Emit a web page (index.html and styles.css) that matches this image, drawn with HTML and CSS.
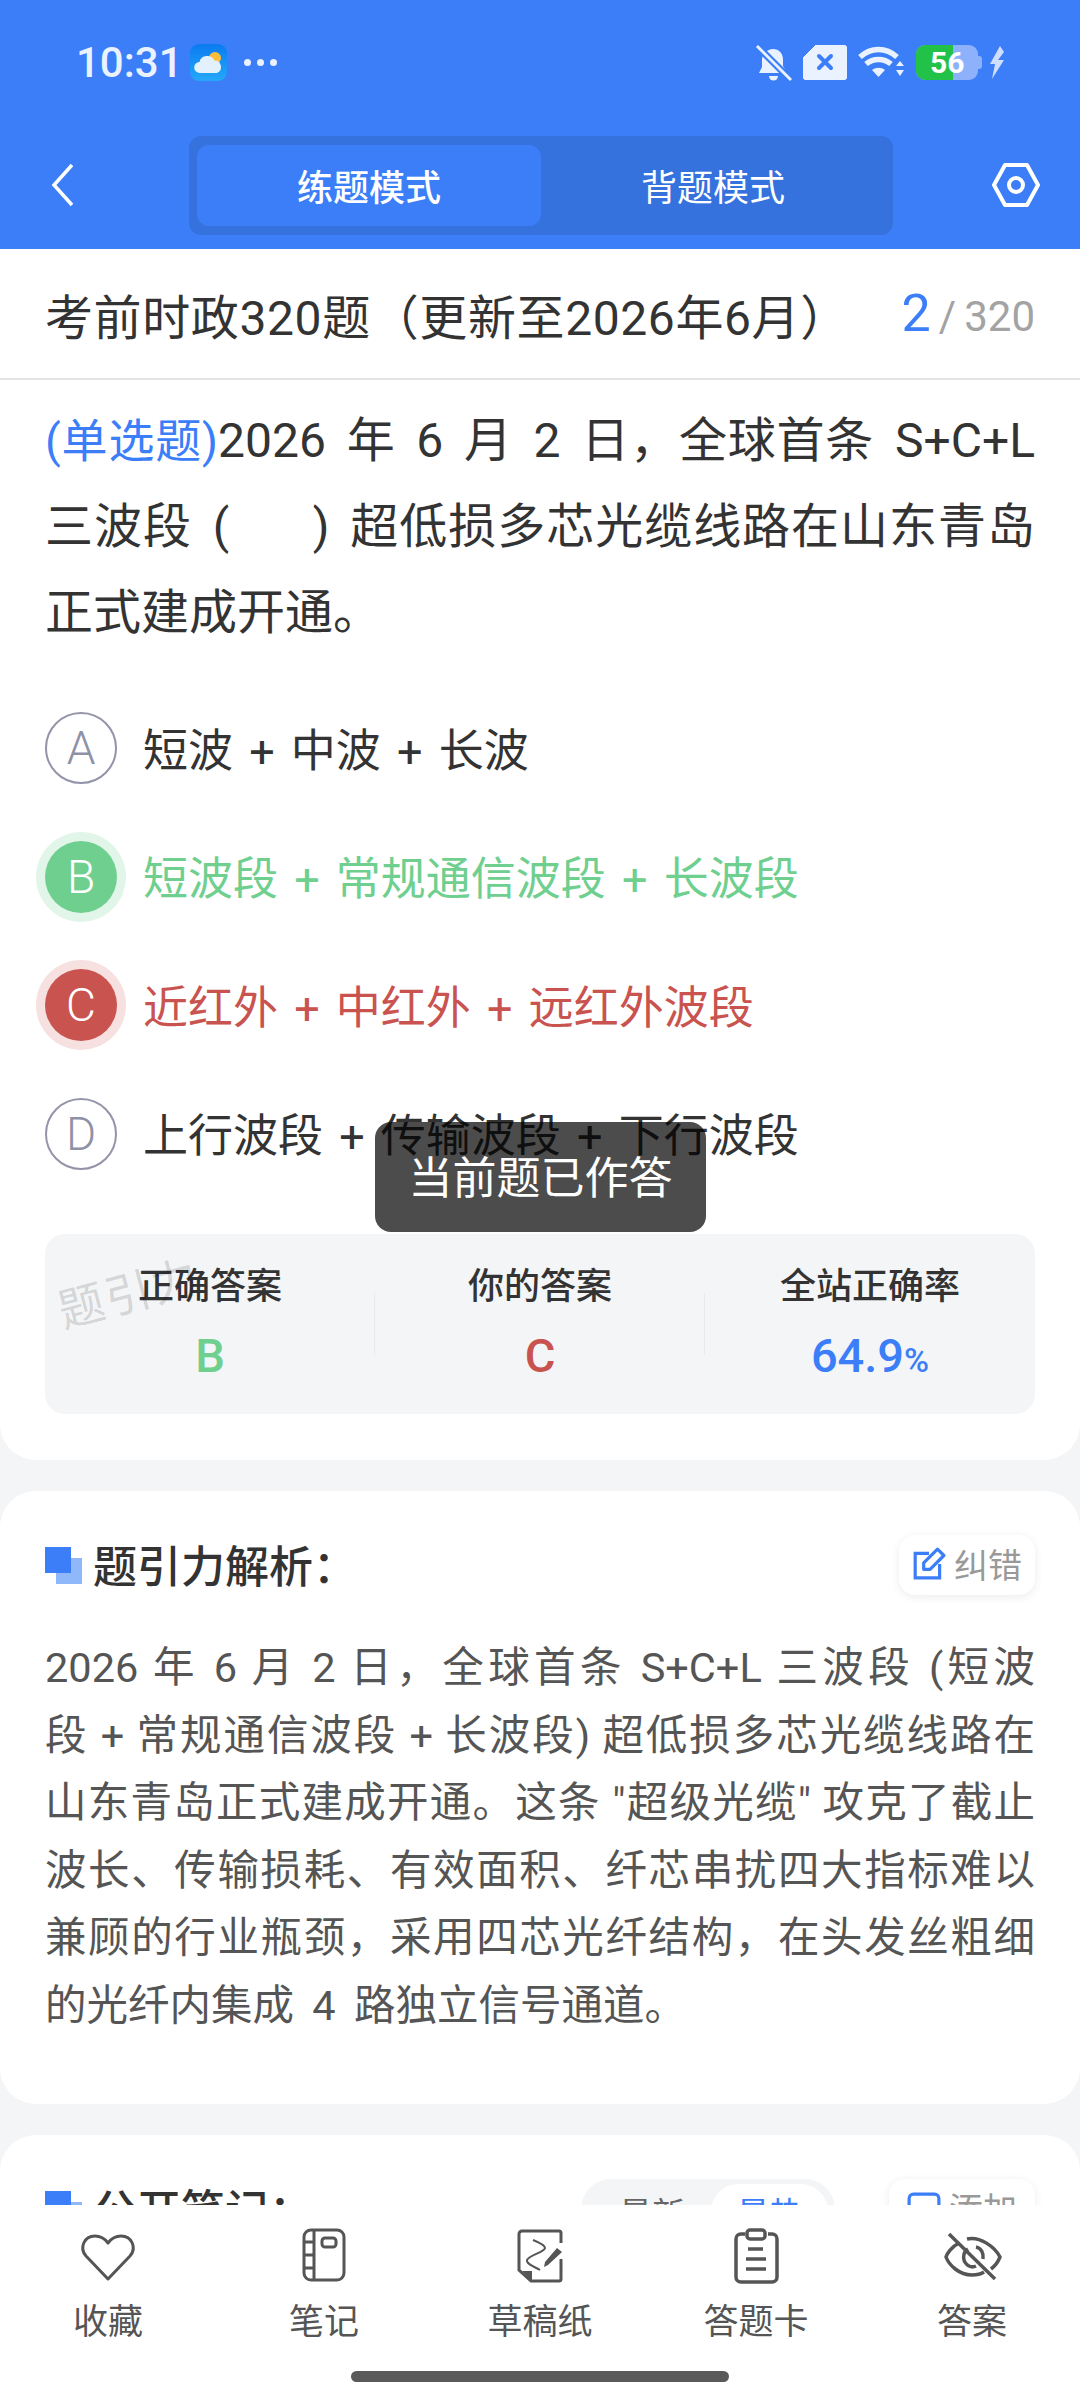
FILE: index.html
```html
<!DOCTYPE html>
<html lang="zh-CN">

<head>
    <meta charset="UTF-8">
    <meta name="viewport" content="width=device-width, initial-scale=1.0">
    <title>练题模式</title>
    <link rel="stylesheet" href="styles.css">
</head>

<body>
    <div class="page">
        <header class="top">
            <div class="status-bar">
                <span class="time">10:31</span>
                <svg class="weather" viewBox="0 0 37 37">
                    <defs>
                        <linearGradient id="sky" x1="0" y1="0" x2="0" y2="1">
                            <stop offset="0" stop-color="#0a7bf0" />
                            <stop offset="1" stop-color="#25a8fb" />
                        </linearGradient>
                    </defs>
                    <rect width="37" height="37" rx="9" fill="url(#sky)" />
                    <circle cx="25" cy="14" r="6" fill="#fdbd3a" />
                    <path d="M10 29a5.5 5.5 0 0 1-.6-11 8 8 0 0 1 15-1.500 6.500 6.500 0 0 1 2.600 12.500z" fill="#e3f1fd" />
                </svg>
                <span class="dots"><i></i><i></i><i></i></span>
                <div class="status-right">
                    <svg class="s-bell" viewBox="0 0 37 38">
                        <path d="M18 5c6 0 10 4 10 11v6l4 7H4l3-6v-7c0-6 5-11 11-11z" fill="#eaf1ff" />
                        <path d="M14 32h9a4.500 4.500 0 0 1-9 0z" fill="#eaf1ff" />
                        <path d="M1 1l35 35" stroke="#3b7ef8" stroke-width="7" />
                        <path d="M2 2l34 34" stroke="#eaf1ff" stroke-width="3" />
                    </svg>
                    <svg class="s-box" viewBox="0 0 44 35">
                        <path d="M13 0h27a4 4 0 0 1 4 4v27a4 4 0 0 1-4 4H4a4 4 0 0 1-4-4V13z" fill="#eaf1ff" stroke="#eaf1ff" stroke-linejoin="round" />
                        <path d="M16 11l12 12M28 11L16 23" stroke="#3b7ef8" stroke-width="4" stroke-linecap="round" />
                    </svg>
                    <svg class="s-wifi" viewBox="0 0 47 33">
                        <path d="M2 11c11-10 26-10 37 0M8 18c7-6 18-6 25 0" fill="none" stroke="#eaf1ff" stroke-width="5.500" />
                        <path d="M14 24c4-3 9-3 13 0l-6.500 7z" fill="#eaf1ff" />
                        <path d="M38 20h8l-4-5zM38 24h8l-4 6z" fill="#eaf1ff" />
                    </svg>
                    <div class="battery">
                        <span class="battery-level"></span>
                        <span class="battery-num">56</span>
                        <span class="battery-tip"></span>
                    </div>
                    <svg class="s-bolt" viewBox="0 0 16 33">
                        <path d="M11 0L1 18h5l-3 15 12-19H9l6-8z" fill="#cfdefc" />
                    </svg>
                </div>
            </div>
            <nav class="nav">
                <svg class="nav-back" viewBox="0 0 24 44">
                    <path d="M21 2L3 22l18 20" fill="none" stroke="#fff" stroke-width="3.500" />
                </svg>
                <div class="tabs">
                    <div class="tab tab-active">练题模式</div>
                    <div class="tab">背题模式</div>
                </div>
                <svg class="nav-set" viewBox="0 0 48 44">
                    <path d="M13 2h22l11 20-11 20H13L2 22z" fill="none" stroke="#fff" stroke-width="4" stroke-linejoin="round" />
                    <circle cx="24" cy="22" r="7" fill="none" stroke="#fff" stroke-width="4" />
                </svg>
            </nav>
        </header>

        <div class="scroll">
            <section class="card card-first">
                <div class="title-row">
                    <h1>考前时政320题（更新至2026年6月）</h1>
                    <div class="count"><b>2</b><span class="slash">/</span><span>320</span></div>
                </div>
                <div class="question-body">
                    <p class="question"><span class="q-type">(单选题)</span>2026 年 6 月 2 日，全球首条 S+C+L 三波段 (&nbsp;&nbsp;&nbsp;&nbsp;) 超低损多芯光缆线路在山东青岛正式建成开通。</p>
                    <div class="options">
                        <div class="option"><span class="letter">A</span>短波 + 中波 + 长波</div>
                        <div class="option option-right"><span class="letter">B</span>短波段 + 常规通信波段 + 长波段</div>
                        <div class="option option-wrong"><span class="letter">C</span>近红外 + 中红外 + 远红外波段</div>
                        <div class="option"><span class="letter">D</span>上行波段 + 传输波段 + 下行波段</div>
                    </div>
                    <div class="stats">
                        <div class="stat">
                            <div class="stat-label">正确答案</div>
                            <div class="stat-value green">B</div>
                        </div>
                        <div class="stat">
                            <div class="stat-label">你的答案</div>
                            <div class="stat-value red">C</div>
                        </div>
                        <div class="stat">
                            <div class="stat-label">全站正确率</div>
                            <div class="stat-value blue">64.9<small>%</small></div>
                        </div>
                        <span class="watermark">题引力</span>
                    </div>
                </div>
            </section>

            <section class="card">
                <div class="card-head">
                    <span class="mark"></span>
                    <h2>题引力解析：</h2>
                    <div class="small-btn">
                        <svg viewBox="0 0 32 32">
                            <path d="M16 6H3v23h23V16" fill="none" stroke="#3b7ef8" stroke-width="3" />
                            <path d="M11 21v-6L24 2l6 6-13 13z" fill="none" stroke="#3b7ef8" stroke-width="3" stroke-linejoin="round" />
                        </svg>
                        纠错
                    </div>
                </div>
                <div class="analysis">
                    <p>2026 年 6 月 2 日，全球首条 S+C+L 三波段 (短波</p>
                    <p>段 + 常规通信波段 + 长波段) 超低损多芯光缆线路在</p>
                    <p>山东青岛正式建成开通。这条 "超级光缆" 攻克了截止</p>
                    <p>波长、传输损耗、有效面积、纤芯串扰四大指标难以</p>
                    <p>兼顾的行业瓶颈，采用四芯光纤结构，在头发丝粗细</p>
                    <p class="analysis-end">的光纤内集成 4 路独立信号通道。</p>
                </div>
            </section>

            <section class="card">
                <div class="card-head">
                    <span class="mark"></span>
                    <h2>公开笔记：</h2>
                    <div class="sort">
                        <span>最新</span>
                        <span class="sort-active">最热</span>
                    </div>
                    <div class="small-btn small-btn-wide">
                        <svg viewBox="0 0 32 32">
                            <rect x="2" y="3" width="28" height="24" rx="4" fill="none" stroke="#3b7ef8" stroke-width="3" />
                            <path d="M10 15h12" stroke="#3b7ef8" stroke-width="3" />
                        </svg>
                        添加
                    </div>
                </div>
            </section>
        </div>

        <footer class="bottom">
            <div class="tools">
                <div class="tool">
                    <svg viewBox="0 0 60 60">
                        <path d="M30 53L8 30C1 22 6 10 17 10c6 0 10 3 13 7 3-4 7-7 13-7 11 0 16 12 9 20z" fill="none" stroke="#555" stroke-width="3" stroke-linejoin="round" />
                    </svg>
                    <span>收藏</span>
                </div>
                <div class="tool">
                    <svg viewBox="0 0 60 60">
                        <rect x="10" y="4" width="40" height="50" rx="7" fill="none" stroke="#555" stroke-width="3" />
                        <path d="M20 4v50M10 16h10M10 29h10M10 42h10" fill="none" stroke="#555" stroke-width="3" />
                        <rect x="28" y="12" width="14" height="9" rx="3" fill="none" stroke="#555" stroke-width="3" />
                    </svg>
                    <span>笔记</span>
                </div>
                <div class="tool">
                    <svg viewBox="0 0 60 60">
                        <path d="M51 17V7a2 2 0 0 0-2-2H12a3 3 0 0 0-3 3v36l12 11h28a2 2 0 0 0 2-2V33" fill="none" stroke="#555" stroke-width="3" />
                        <path d="M12 45h10v10z" fill="#555" />
                        <path d="M23 14c5 2 12 5 12 8 0 4-16 7-18 12-1 4 8 7 13 10" fill="none" stroke="#555" stroke-width="2" />
                        <path d="M38 39l-4 2 1-5 12-14 5 4z" fill="#555" />
                    </svg>
                    <span>草稿纸</span>
                </div>
                <div class="tool">
                    <svg viewBox="0 0 60 60">
                        <path d="M19 8h-4c-3 0-5 2-5 5v38c0 3 2 5 5 5h31c3 0 5-2 5-5V13c0-3-2-5-5-5h-4" fill="none" stroke="#555" stroke-width="3.500" />
                        <rect x="21" y="4" width="18" height="9" rx="3" fill="none" stroke="#555" stroke-width="3.500" />
                        <path d="M22 23h15M20 33h20M20 43h20" stroke="#555" stroke-width="3.500" />
                    </svg>
                    <span>答题卡</span>
                </div>
                <div class="tool">
                    <svg viewBox="0 0 60 60">
                        <path d="M17 17C9 21 5 28 4 31c3 8 13 18 26 18 5 0 9-1 12-3M25 13c13-3 28 8 33 18-2 5-5 9-9 12" fill="none" stroke="#555" stroke-width="3.500" />
                        <path d="M34 21c5 1 8 6 7 12M26 23c-6 4-6 13 1 17 2 1 5 1 7 0" fill="none" stroke="#555" stroke-width="3.500" />
                        <path d="M7 8l46 45" stroke="#555" stroke-width="3.500" />
                    </svg>
                    <span>答案</span>
                </div>
            </div>
            <div class="home-bar"></div>
        </footer>

        <div class="toast">当前题已作答</div>
    </div>
</body>

</html>
```

FILE: styles.css
```css
* {
    box-sizing: border-box;
}

body {
    margin: 0;
    background-color: #f4f5f7;
    font-family: Roboto, 'Noto Sans CJK SC', sans-serif;
    color: #333;
}

.page {
    position: relative;
    width: 1080px;
    height: 2400px;
    display: flex;
    flex-direction: column;
    overflow: hidden;
}

/* top blue area */
.top {
    height: 249px;
    background-color: #3b7ef8;
    flex-shrink: 0;
}

.status-bar {
    height: 125px;
    padding: 0 75px 0 76px;
    display: flex;
    align-items: center;
}

.time {
    font-size: 42px;
    font-weight: 500;
    color: #eaf1ff;
    width: 114px;
    line-height: 42px;
}

.weather {
    width: 37px;
    height: 37px;
}

.dots {
    display: flex;
    gap: 6px;
    margin-left: 17px;
}

.dots i {
    width: 7px;
    height: 7px;
    border-radius: 50%;
    background-color: #eaf1ff;
}

.status-right {
    margin-left: auto;
    display: flex;
    align-items: center;
}

.s-bell {
    width: 37px;
    height: 38px;
    margin-right: 11px;
}

.s-box {
    width: 44px;
    height: 35px;
    margin-right: 11px;
}

.s-wifi {
    width: 47px;
    height: 33px;
    margin-right: 11px;
}

.battery {
    position: relative;
    width: 62px;
    height: 35px;
    border-radius: 9px;
    background-color: #8db2fb;
    overflow: visible;
    margin-right: 11px;
}

.battery-level {
    display: block;
    width: 37px;
    height: 35px;
    background-color: #22c148;
    border-radius: 9px 0 0 9px;
}

.battery-num {
    position: absolute;
    top: 0;
    left: 14px;
    font-size: 30px;
    line-height: 35px;
    font-weight: 700;
    color: #fff;
}

.battery-tip {
    position: absolute;
    top: 11px;
    right: -4px;
    width: 4px;
    height: 13px;
    border-radius: 0 3px 3px 0;
    background-color: #8db2fb;
}

.s-bolt {
    width: 16px;
    height: 33px;
}

.nav {
    height: 124px;
    padding: 10px 40px 14px 51px;
    display: flex;
    align-items: center;
}

.nav-back {
    width: 24px;
    height: 44px;
}

.tabs {
    width: 704px;
    height: 99px;
    margin-left: 114px;
    padding: 9px 8px;
    display: flex;
    border-radius: 12px;
    background-color: #3672dd;
}

.tab {
    width: 344px;
    display: flex;
    align-items: center;
    justify-content: center;
    font-size: 36px;
    color: #fff;
    border-radius: 12px;
}

.tab-active {
    background-color: #3b7ef8;
    font-weight: 500;
}

.nav-set {
    width: 48px;
    height: 44px;
    margin-left: auto;
}

/* scrolling content */
.scroll {
    flex: 1;
    overflow: hidden;
}

.card {
    background-color: white;
    border-radius: 36px;
    margin-bottom: 31px;
    padding: 44px 45px 65px;
}

.card-first {
    padding: 0;
    border-radius: 0 0 36px 36px;
}

.title-row {
    height: 131px;
    padding: 0 45px;
    display: flex;
    justify-content: space-between;
    align-items: center;
    border-bottom: 2px solid #e4e4e4;
}

h1 {
    margin: 0;
    font-size: 48px;
    font-weight: 400;
    letter-spacing: 0.6px;
    color: #333;
    white-space: nowrap;
}

.count {
    display: flex;
    align-items: baseline;
    font-size: 42px;
    color: #a3a3a3;
}

.count b {
    font-size: 52px;
    font-weight: 400;
    color: #3b7ef8;
    margin-right: 8px;
}

.slash {
    margin-right: 8px;
}

.question-body {
    padding: 18px 45px 46px;
}

.question {
    margin: 0;
    font-size: 48px;
    line-height: 86px;
    text-align: justify;
    word-spacing: 8px;
    color: #333;
}

.q-type {
    font-size: 46px;
    word-spacing: 0;
    color: #3b7ef8;
}

.options {
    margin-top: 28px;
}

.option {
    height: 128.5px;
    padding-bottom: 2px;
    display: flex;
    align-items: center;
    gap: 26px;
    font-size: 45px;
    word-spacing: 5px;
    color: #333;
    white-space: pre;
}

.letter {
    width: 72px;
    height: 72px;
    margin-top: 2px;
    display: flex;
    align-items: center;
    justify-content: center;
    border: 2px solid #9394a9;
    border-radius: 50%;
    color: #8f91a6;
    font-size: 46px;
    font-weight: 300;
    flex-shrink: 0;
}

.option-right {
    color: #6fcf8f;
}

.option-right .letter {
    background-color: #6fcf8f;
    border: none;
    color: #fff;
    box-shadow: 0 0 0 9px #e2f5e9;
}

.option-wrong {
    color: #c9534f;
}

.option-wrong .letter {
    background-color: #c9534f;
    border: none;
    color: #fff;
    box-shadow: 0 0 0 9px #f6e0e0;
}

.stats {
    position: relative;
    height: 180px;
    margin-top: 36px;
    display: flex;
    background-color: #f4f5f7;
    border-radius: 20px;
}

.stat {
    position: relative;
    flex: 1;
    padding-top: 29px;
    text-align: center;
}

.stat + .stat::before {
    content: '';
    position: absolute;
    left: -1px;
    top: 59px;
    height: 62px;
    width: 1px;
    background-color: #e8e9ec;
}

.stat-label {
    font-size: 36px;
    line-height: 48px;
    font-weight: 500;
    color: #333;
}

.stat-value {
    margin-top: 21px;
    font-size: 47px;
    line-height: 48px;
    font-weight: 500;
}

.stat-value small {
    font-size: 34px;
}

.green {
    color: #6fcf8f;
}

.red {
    color: #c9534f;
}

.blue {
    color: #3b7ef8;
}

.watermark {
    position: absolute;
    left: 12px;
    top: 32px;
    font-size: 46px;
    letter-spacing: 2px;
    color: rgba(0, 0, 0, 0.14);
    transform: rotate(-15deg);
    line-height: 56px;
}

.card-head {
    height: 60px;
    display: flex;
    align-items: center;
}

.mark {
    position: relative;
    width: 37px;
    height: 37px;
    margin-right: 11px;
    flex-shrink: 0;
}

.mark::before {
    content: '';
    position: absolute;
    right: 0;
    bottom: 0;
    width: 26px;
    height: 26px;
    background-color: #8fb8fb;
}

.mark::after {
    content: '';
    position: absolute;
    left: 0;
    top: 0;
    width: 26px;
    height: 26px;
    background-color: #3b7ef8;
}

h2 {
    margin: 0 auto 0 0;
    padding-bottom: 3px;
    font-size: 44px;
    font-weight: 500;
    color: #333;
}

.small-btn {
    height: 60px;
    padding: 0 13px 3px;
    display: flex;
    align-items: center;
    gap: 8px;
    font-size: 34px;
    color: #999;
    background-color: white;
    border-radius: 16px;
    box-shadow: 0 2px 10px rgba(0, 0, 0, 0.08);
}

.small-btn-wide {
    padding: 0 18px 3px;
}

.small-btn svg {
    width: 34px;
    height: 34px;
}

.sort {
    height: 60px;
    width: 254px;
    margin-right: 54px;
    padding: 5px 7px 0 38px;
    display: flex;
    align-items: flex-start;
    justify-content: space-between;
    background-color: #f4f5f7;
    border-radius: 30px;
    font-size: 33px;
    color: #666;
}

.sort span {
    padding-top: 4px;
}

.sort-active {
    width: 117px;
    height: 55px;
    text-align: center;
    border-radius: 28px;
    background-color: white;
    color: #3b7ef8;
}

.analysis {
    margin-top: 39px;
    font-size: 41.5px;
    line-height: 67.5px;
    color: #555;
}

.analysis p {
    margin: 0;
    white-space: nowrap;
    text-align: justify;
    text-align-last: justify;
}

.analysis .analysis-end {
    text-align-last: left;
    word-spacing: 8px;
}

/* bottom tool bar */
.bottom {
    height: 195px;
    flex-shrink: 0;
    position: relative;
    background-color: white;
}

.tools {
    display: flex;
}

.tool {
    width: 216px;
    padding-top: 21px;
    display: flex;
    flex-direction: column;
    align-items: center;
    font-size: 35px;
    color: #555;
}

.tool svg {
    width: 60px;
    height: 60px;
}

.tool span {
    margin-top: 12px;
    line-height: 50px;
}

.home-bar {
    position: absolute;
    left: 351px;
    top: 166px;
    width: 378px;
    height: 11px;
    border-radius: 6px;
    background-color: #5a5a5a;
}

.toast {
    position: absolute;
    left: 375px;
    top: 1122px;
    width: 331px;
    height: 110px;
    padding-bottom: 4px;
    display: flex;
    align-items: center;
    justify-content: center;
    font-size: 44px;
    color: white;
    background-color: rgba(0, 0, 0, 0.7);
    border-radius: 16px;
}
```
